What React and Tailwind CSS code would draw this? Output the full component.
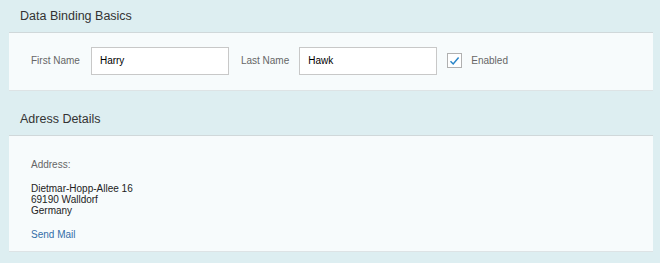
export default function App() {
  return (
    <div
      className="w-[660px] h-[263px] bg-[#ddeef1] pl-[9px] pr-[7px] text-[#333]"
      style={{ fontFamily: '"Liberation Sans", Arial, sans-serif' }}
    >
      <div className="h-[32px] flex items-center pl-[11px] text-[12.5px] text-[#333]">
        Data Binding Basics
      </div>
      <div className="bg-[#f7fbfc] border-t border-t-[#d0d8da] border-b border-b-[#dde3e5] h-[59px] flex items-center pl-[22px] pb-[2px]">
        <span className="text-[10px] text-[#666] mr-[11px]">First Name</span>
        <input
          readOnly
          value="Harry"
          className="w-[138px] h-[28px] bg-white border border-[#c8c8c8] px-[8px] text-[10px] text-black outline-none"
          style={{ fontFamily: '"Liberation Sans", Arial, sans-serif' }}
        />
        <span className="text-[10px] text-[#666] ml-[12px] mr-[10px]">Last Name</span>
        <input
          readOnly
          value="Hawk"
          className="w-[138px] h-[28px] bg-white border border-[#c8c8c8] px-[8px] text-[10px] text-black outline-none"
          style={{ fontFamily: '"Liberation Sans", Arial, sans-serif' }}
        />
        <span className="ml-[10px] w-[15px] h-[15px] border border-[#b0b0b0] bg-white flex items-center justify-center">
          <svg width="11" height="10" viewBox="0 0 11 10">
            <path d="M1.5 5.2 L4.2 8 L9.6 1.6" fill="none" stroke="#2a86c9" strokeWidth="1.5" />
          </svg>
        </span>
        <span className="text-[10px] text-[#666] ml-[9px]">Enabled</span>
      </div>
      <div className="mt-[12px] h-[32px] flex items-center pl-[11px] text-[12.5px] text-[#333]">
        Adress Details
      </div>
      <div className="bg-[#f7fbfc] border-t border-t-[#d0d8da] border-b border-b-[#dde3e5] h-[117px] pl-[22px] pt-[22px] text-[10px]">
        <div className="text-[#666] leading-[14px]">Address:</div>
        <div className="mt-[11px] text-[#222] leading-[11px]">
          <div>Dietmar-Hopp-Allee 16</div>
          <div>69190 Walldorf</div>
          <div>Germany</div>
        </div>
        <div className="mt-[12px] text-[#346ea8] leading-[14px]">Send Mail</div>
      </div>
    </div>
  );
}
